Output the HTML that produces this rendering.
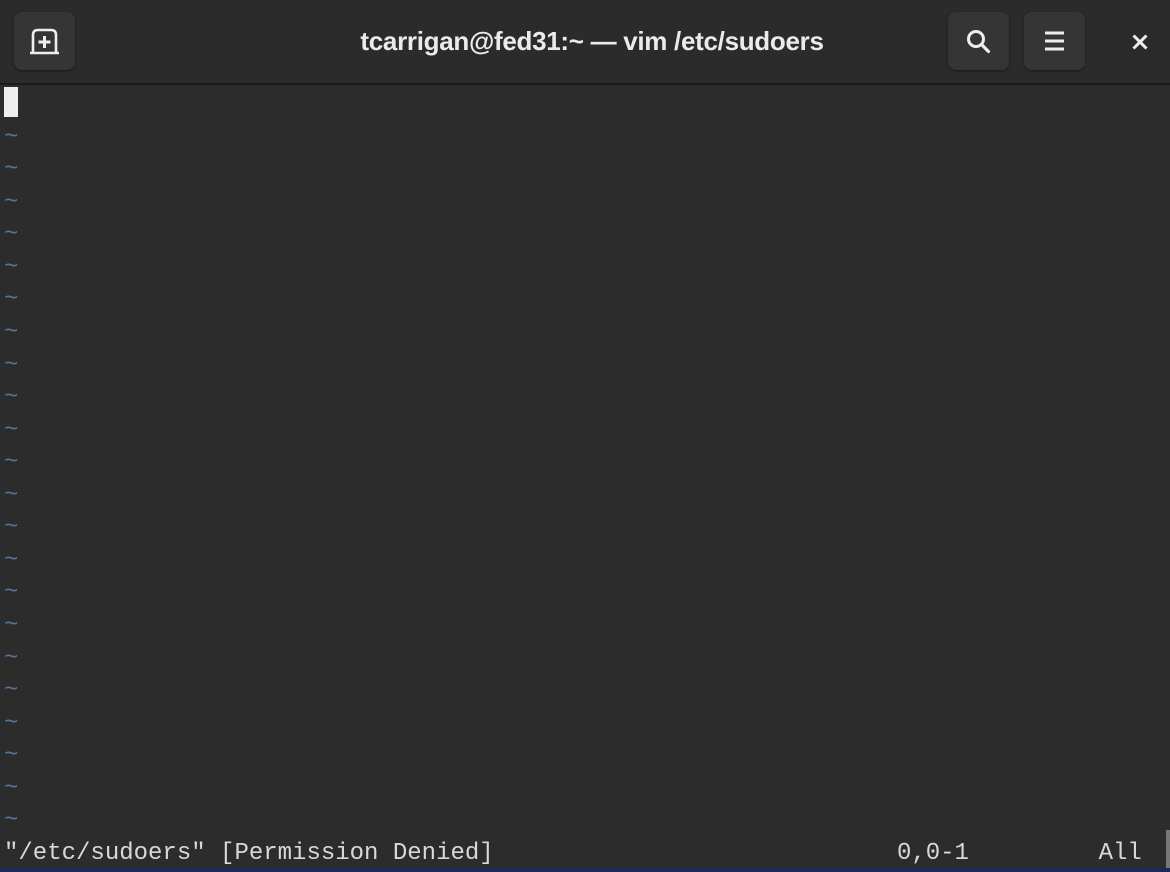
<!DOCTYPE html>
<html><head><style>
html,body{margin:0;padding:0;width:1170px;height:872px;overflow:hidden;background:#2c2c2c}
.hdr{position:absolute;left:0;top:0;width:1170px;height:83px;background:#2b2b2b;border-bottom:2px solid #1b1b1b}
.btn{position:absolute;top:12px;width:61px;height:58px;background:#353535;border-radius:8px;box-shadow:0 1px 2px #1a1a1a}
.title{position:absolute;left:0;width:1184px;top:26px;text-align:center;color:#ebebeb;font:bold 26px "Liberation Sans",sans-serif;letter-spacing:-0.3px}
.term{position:absolute;left:4px;top:89px;width:1162px;height:779px;background:#2c2c2c;font:24px/32.57px "Liberation Mono",monospace;color:#d8d8d8;white-space:pre}
.t{color:#55759a}
.cur{display:inline-block;width:14px;height:30px;background:#eeeeee;vertical-align:top;margin-top:-2px}
.bot{position:absolute;left:0;top:868px;width:1170px;height:4px;background:#1e2a55}
.rl{position:absolute;left:1166px;top:830px;width:4px;height:38px;background:#777}
</style></head><body>
<div class="hdr">
<div class="btn" style="left:14px"><svg width="61" height="58" viewBox="0 0 61 58"><path d="M19 40V23q0-5 5-5h13q5 0 5 5v17" fill="none" stroke="#eee" stroke-width="2.6"/><path d="M16 41h29" stroke="#eee" stroke-width="2.6"/><path d="M30.5 24v12M24.5 30h12" stroke="#eee" stroke-width="3"/></svg></div>
<div class="title">tcarrigan@fed31:~ — vim /etc/sudoers</div>
<div class="btn" style="left:948px"><svg width="61" height="58" viewBox="0 0 61 58"><circle cx="28" cy="27" r="7.5" fill="none" stroke="#eee" stroke-width="3"/><path d="M33.5 32.5l7 7" stroke="#eee" stroke-width="3.2" stroke-linecap="round"/></svg></div>
<div class="btn" style="left:1024px"><svg width="61" height="58" viewBox="0 0 61 58"><path d="M21 21h19M21 29h19M21 37h19" stroke="#eee" stroke-width="3"/></svg></div>
<svg style="position:absolute;left:1128px;top:30px" width="24" height="24" viewBox="0 0 24 24"><path d="M5.5 5.5l13 13M18.5 5.5l-13 13" stroke="#eee" stroke-width="3"/></svg>
</div>
<div class="term"><span class="cur"></span>
<span class="t">~</span>
<span class="t">~</span>
<span class="t">~</span>
<span class="t">~</span>
<span class="t">~</span>
<span class="t">~</span>
<span class="t">~</span>
<span class="t">~</span>
<span class="t">~</span>
<span class="t">~</span>
<span class="t">~</span>
<span class="t">~</span>
<span class="t">~</span>
<span class="t">~</span>
<span class="t">~</span>
<span class="t">~</span>
<span class="t">~</span>
<span class="t">~</span>
<span class="t">~</span>
<span class="t">~</span>
<span class="t">~</span>
<span class="t">~</span>
"/etc/sudoers" [Permission Denied]                            0,0-1         All</div>
<div class="rl"></div>
<div class="bot"></div>
</body></html>
